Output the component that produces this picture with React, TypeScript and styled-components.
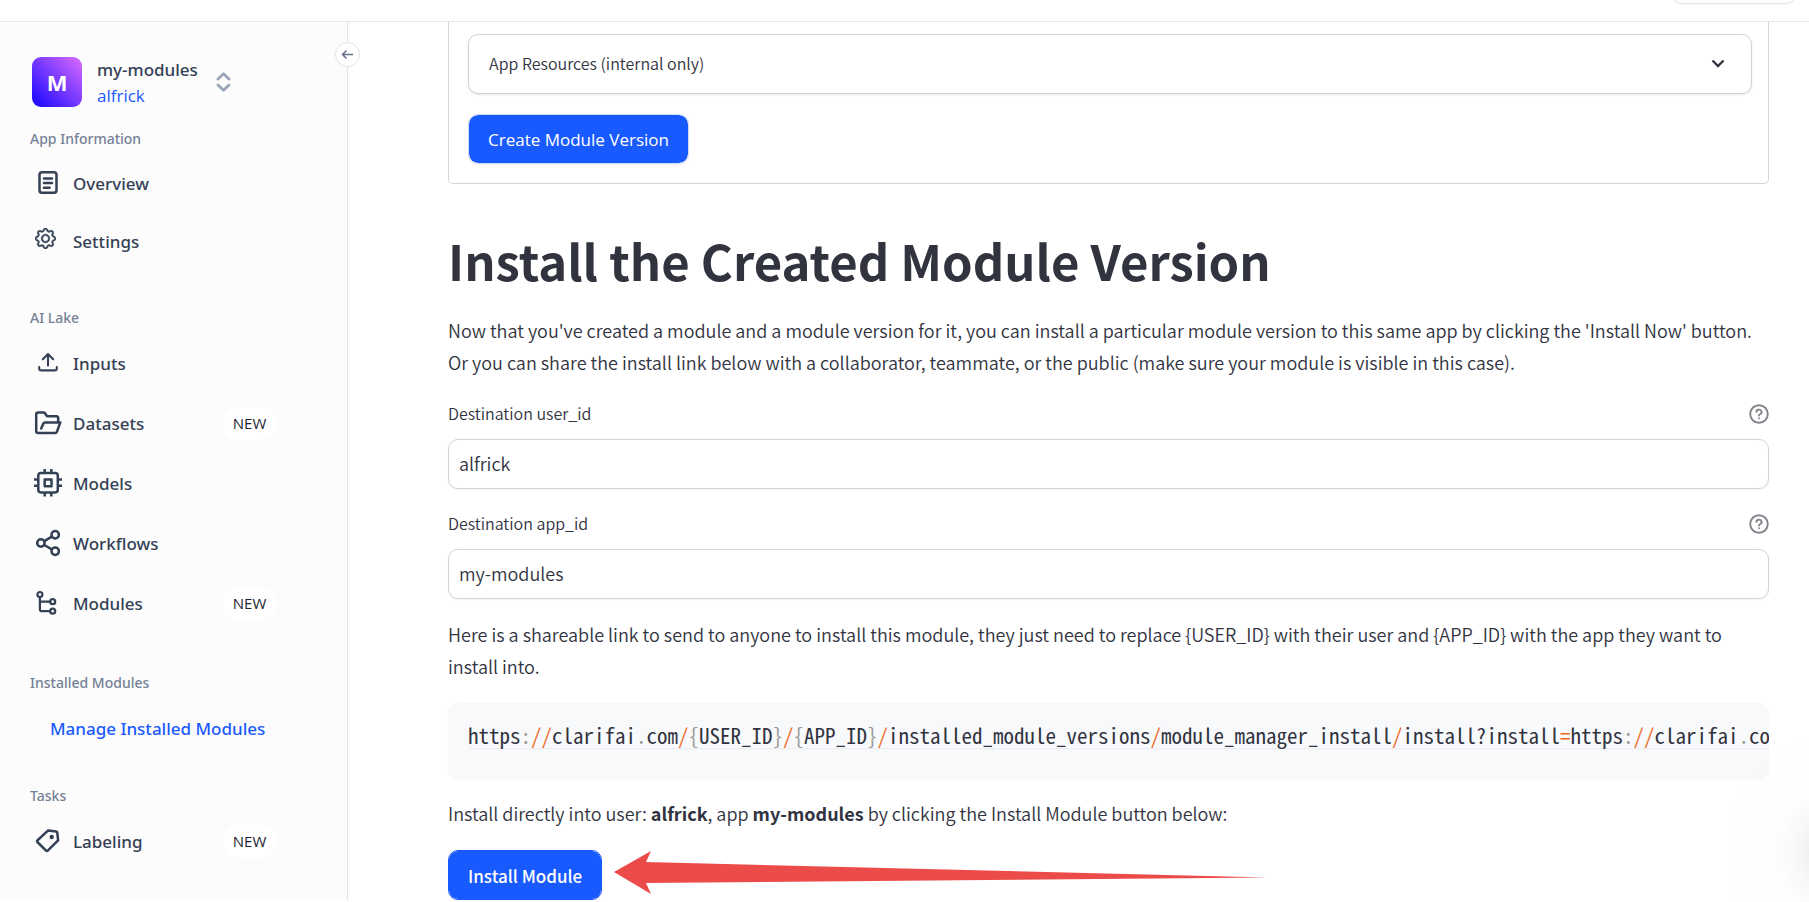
import React from "react";
import styled, { createGlobalStyle } from "styled-components";
import { BsGear } from "react-icons/bs";

const SANS = '"Noto Sans CJK SC", "Noto Sans", sans-serif';
const UI = '"Open Sans", "Noto Sans", sans-serif';
const UI_MEDIUM = '"Noto Sans", "Open Sans", sans-serif';

const GlobalStyle = createGlobalStyle`
  * { box-sizing: border-box; }
  body { margin: 0; background: #fff; color: #31333f; font-family: ${SANS}; font-weight: 350; overflow: hidden; }
  button, input { font: inherit; }
  a { text-decoration: none; color: inherit; }
`;

const Page = styled.div`
  display: flex;
  flex-direction: column;
`;

const TopBar = styled.header`
  display: flex;
  justify-content: flex-end;
  align-items: flex-end;
  height: 22px;
  padding: 0 13px 17px 0;
  border-bottom: 1px solid #e5e7eb;
  overflow: hidden;
`;

const TopButton = styled.button`
  flex: none;
  width: 124px;
  height: 40px;
  border: 1px solid #e2e5ec;
  border-radius: 10px;
  background: #fff;
  box-shadow: 0 1px 2px rgba(0, 0, 0, 0.04);
`;

const Body = styled.div`
  display: flex;
  align-items: stretch;
`;

const Sidebar = styled.aside`
  position: relative;
  flex: none;
  width: 348px;
  padding-top: 35px;
  background: #fcfcfc;
  border-right: 1px solid #e2e3e8;
  font-family: ${UI};
  color: #344054;
`;

const Collapse = styled.button`
  position: absolute;
  top: 20px;
  right: -13px;
  display: flex;
  align-items: center;
  justify-content: center;
  width: 25px;
  height: 25px;
  padding: 0;
  border: 1px solid #e2e3e8;
  border-radius: 50%;
  background: #fff;
`;

const Account = styled.div`
  display: flex;
  align-items: center;
  height: 50px;
  margin-bottom: 22px;
  padding-left: 32px;
`;

const Logo = styled.div`
  display: flex;
  align-items: center;
  justify-content: center;
  width: 50px;
  height: 50px;
  margin-right: 15px;
  border-radius: 9px;
  background: linear-gradient(to top right, #1405ff, #da6cff);
  color: #fff;
  font-size: 22px;
  font-weight: 700;
`;

const AccountText = styled.div`
  display: flex;
  flex-direction: column;
  margin-right: 18px;
  padding-top: 2px;
  font-family: ${UI_MEDIUM};
  font-size: 17px;
  line-height: 26px;
  font-weight: 500;
`;

const UserLink = styled.a`
  color: #195aff;
  font-family: ${UI};
  font-weight: 400;
`;

const Switcher = styled.button`
  display: flex;
  padding: 0;
  border: 0;
  background: none;
`;

const Section = styled.nav<{ $after: number; $row?: number }>`
  --row-height: ${(p) => p.$row ?? 60}px;
  padding-bottom: ${(p) => p.$after}px;
`;

const SectionTitle = styled.h2`
  margin: 0 0 5px;
  padding-left: 30px;
  font-family: ${UI_MEDIUM};
  font-size: 14px;
  line-height: 20px;
  font-weight: 500;
  color: #758195;
`;

const NavItem = styled.a`
  display: flex;
  align-items: center;
  gap: 11px;
  height: var(--row-height);
  padding: 0 71px 0 34px;
  font-family: ${UI_MEDIUM};
  font-size: 17px;
  font-weight: 500;
`;

const ManageLink = styled(NavItem)`
  padding-left: 50px;
  color: #195aff;
`;

const Badge = styled.span`
  margin-left: auto;
  width: 53px;
  border-radius: 17px;
  background: #fff;
  color: #1f1f33;
  font-family: ${UI};
  font-size: 15px;
  line-height: 33px;
  font-weight: 400;
  text-align: center;
`;

const Main = styled.main`
  flex: 1;
  min-width: 0;
  display: flex;
  flex-direction: column;
  align-items: stretch;
  gap: 20px;
  padding: 0 40px 0 100px;
`;

const FormPanel = styled.section`
  display: flex;
  flex-direction: column;
  align-items: flex-start;
  gap: 20px;
  padding: 12px 16px 19px 19px;
  border: 1px solid #d3d5da;
  border-top: 0;
  border-radius: 0 0 5px 5px;
`;

const Expander = styled.button`
  display: flex;
  align-items: center;
  justify-content: space-between;
  width: 100%;
  height: 60px;
  padding: 0 26px 2px 20px;
  border: 1px solid #cdd2dc;
  border-radius: 10px;
  background: #fff;
  box-shadow: 0 1px 2px rgba(16, 24, 40, 0.1);
  color: #31333f;
  font-size: 16px;
`;

const PrimaryButton = styled.button<{ $strong?: boolean }>`
  align-self: flex-start;
  height: 50px;
  padding: 0 19px;
  border: 1px solid ${(p) => (p.$strong ? "#195aff" : "#d3dcf5")};
  border-radius: 10px;
  background: #195aff;
  background-clip: padding-box;
  box-shadow: 0 1px 2px rgba(16, 24, 40, 0.06);
  color: #fff;
  font-family: ${(p) => (p.$strong ? SANS : UI)};
  font-size: 17px;
  font-weight: ${(p) => (p.$strong ? 500 : 400)};
`;

const Title = styled.h1`
  margin: 0;
  padding: 24px 0 4px;
  font-size: 49px;
  line-height: 63px;
  font-weight: 700;
`;

const Text = styled.p`
  margin: -1px 0 1px;
  font-size: 18px;
  line-height: 32px;
`;

const Field = styled.div`
  display: flex;
  flex-direction: column;
  gap: 10px;
`;

const FieldHead = styled.div`
  display: flex;
  align-items: center;
  justify-content: space-between;
  height: 30px;
  font-size: 16px;
`;

const FieldLabel = styled.label`
  padding-bottom: 2px;
`;

const HelpButton = styled.button`
  display: flex;
  padding: 0;
  border: 0;
  background: none;
`;

const TextInput = styled.input`
  width: 100%;
  height: 50px;
  padding: 0 10px 2px;
  border: 1px solid #d0d2de;
  border-radius: 10px;
  background: #fff;
  box-shadow: 0 1px 2px rgba(16, 24, 40, 0.05);
  color: #31333f;
  font-size: 18px;
  outline: none;
`;

const CodeBlock = styled.pre`
  margin: 0;
  height: 75px;
  padding: 20px;
  border-radius: 10px;
  background: #f8f9fb;
  box-shadow: 0 1px 2px rgba(16, 24, 40, 0.04);
  overflow: hidden;
`;

const Code = styled.code`
  display: inline-block;
  border-radius: 5px;
  box-shadow: 0 1px 2px rgba(16, 24, 40, 0.06);
  font-family: "Noto Sans Mono CJK SC", "DejaVu Sans Mono", monospace;
  font-size: 21px;
  line-height: 25px;
`;

const Operator = styled.span`
  color: #ed6a1f;
`;

const Punctuation = styled.span`
  color: #999;
`;

const InstallRow = styled.div`
  display: flex;
  align-items: center;
  gap: 12px;
`;

const Arrow = styled.svg`
  flex: none;
`;

const ChatShadow = styled.div`
  position: fixed;
  right: -60px;
  bottom: 25px;
  width: 50px;
  height: 50px;
  border-radius: 50%;
  box-shadow: 0 0 40px 8px rgba(0, 0, 0, 0.14), 0 0 120px 30px rgba(0, 0, 0, 0.05);
  pointer-events: none;
`;

const iconShapes: Record<string, React.ReactNode> = {
  overview: (
    <>
      <rect x="5.5" y="3.2" width="17" height="20.6" rx="2.6" />
      <path d="M10 9.6h8M10 14h8M10 18.7h5.6" />
    </>
  ),
  inputs: (
    <>
      <path d="M14 16.5V5.5M8.8 10.2 14 5l5.2 5.2" strokeWidth="2.1" />
      <path d="M5.2 18v1.4q0 2 2 2h13.6q2 0 2-2V18" strokeWidth="2.1" />
    </>
  ),
  datasets: (
    <path d="M7.2 19.5 9.4 14.4q.5-1 1.6-1h15.3L23 22.6q-.5 1.4-2 1.4H4.2q-2 0-2-2V5.5q0-2 2-2h5.4q.9 0 1.4.7l1.5 2.3q.5.8 1.4.8h8.3q2 0 2 2v4" />
  ),
  models: (
    <>
      <rect x="4.3" y="3.9" width="19.5" height="19.5" rx="2.6" />
      <rect x="10.7" y="10.4" width="6.8" height="6.8" />
      <path d="M10.7 0v4M17.3 0v4M10.7 23.4v4M17.3 23.4v4M0 10.4h4.3M0 16.8h4.3M23.8 10.4H28M23.8 16.8H28" strokeLinecap="butt" />
    </>
  ),
  workflows: (
    <>
      <circle cx="21.2" cy="5.7" r="3.7" />
      <circle cx="6.9" cy="14" r="3.7" />
      <circle cx="21.2" cy="22.2" r="3.7" />
      <path d="m10.3 12.1 7.5-4.4M10.3 16l7.5 4.3" />
    </>
  ),
  modules: (
    <g strokeWidth="2.2">
      <circle cx="5.9" cy="5.5" r="2.5" />
      <circle cx="18.7" cy="12.7" r="2.5" />
      <circle cx="18.7" cy="22.2" r="2.5" />
      <path d="M5.9 8v12.2q0 2 2 2h8.3M5.9 12.7h10.3" />
    </g>
  ),
  labeling: (
    <>
      <path d="M14.2 3.4 22.2 4.6q1 .2 1.1 1.2l.8 7.6-10.4 10.2q-.8.7-1.6 0L3.3 15q-.7-.8 0-1.5Z" />
      <circle cx="17.7" cy="10" r="2.2" fill="currentColor" stroke="none" />
    </>
  ),
};

function NavIcon({ name }: { name: string }) {
  return (
    <svg width="28" height="28" viewBox="0 0 28 28" fill="none" stroke="#344054" color="#344054" strokeWidth="2.5" strokeLinecap="round" strokeLinejoin="round" aria-hidden="true">
      {name === "settings" ? <BsGear x={1} y={1} size={21} stroke="#344054" strokeWidth={0.5} /> : iconShapes[name]}
    </svg>
  );
}

function NavLink({ icon, label, isNew }: { icon: string; label: string; isNew?: boolean }) {
  return (
    <NavItem href="#">
      <NavIcon name={icon} />
      <span>{label}</span>
      {isNew && <Badge>NEW</Badge>}
    </NavItem>
  );
}

function DestinationField({ id, label, value }: { id: string; label: string; value: string }) {
  return (
    <Field>
      <FieldHead>
        <FieldLabel htmlFor={id}>{label}</FieldLabel>
        <HelpButton type="button" aria-label={`Help: ${label}`}>
          <svg width="20" height="20" viewBox="0 0 20 20" fill="none" stroke="#83858c" strokeWidth="1.9" strokeLinecap="round">
            <circle cx="10" cy="10" r="8.8" />
            <path d="M7.4 7.9a2.6 2.3 0 1 1 3.8 2.1q-1.2.6-1.2 1.5M10 14.2v.1" />
          </svg>
        </HelpButton>
      </FieldHead>
      <TextInput id={id} defaultValue={value} />
    </Field>
  );
}

const INSTALL_LINK =
  "https://clarifai.com/{USER_ID}/{APP_ID}/installed_module_versions/module_manager_install/install?install=https://clarifai.com";

const SHARE_TEXT =
  "Here is a shareable link to send to anyone to install this module, they just need to replace {USER_ID} with their user and {APP_ID} with the app they want to install into.";

function HighlightedLink({ link }: { link: string }) {
  return (
    <>
      {link.split(/([/=:.{}])/).map((part, i) => {
        if (part === "/" || part === "=") return <Operator key={i}>{part}</Operator>;
        if (/^[:.{}]$/.test(part)) return <Punctuation key={i}>{part}</Punctuation>;
        return part;
      })}
    </>
  );
}

export default function App() {
  return (
    <Page>
      <GlobalStyle />
      <TopBar>
        <TopButton type="button" aria-label="Account menu" />
      </TopBar>
      <Body>
        <Sidebar>
          <Collapse type="button" aria-label="Collapse sidebar">
            <svg width="13" height="13" viewBox="0 0 13 13" fill="none" stroke="#64708a" strokeWidth="1.6" strokeLinecap="round" strokeLinejoin="round">
              <path d="M11.5 6.5h-10M5 3 1.5 6.5 5 10" />
            </svg>
          </Collapse>
          <Account>
            <Logo>M</Logo>
            <AccountText>
              <span>my-modules</span>
              <UserLink href="#">alfrick</UserLink>
            </AccountText>
            <Switcher type="button" aria-label="Switch app">
              <svg width="15" height="20" viewBox="0 0 15 20" fill="none" stroke="#9aa5b8" strokeWidth="2.8" strokeLinecap="round" strokeLinejoin="round">
                <path d="m2 7 5.5-5.3L13 7M2 13l5.5 5.3L13 13" />
              </svg>
            </Switcher>
          </Account>
          <Section $after={38} $row={58}>
            <SectionTitle>App Information</SectionTitle>
            <NavLink icon="overview" label="Overview" />
            <NavLink icon="settings" label="Settings" />
          </Section>
          <Section $after={40}>
            <SectionTitle>AI Lake</SectionTitle>
            <NavLink icon="inputs" label="Inputs" />
            <NavLink icon="datasets" label="Datasets" isNew />
            <NavLink icon="models" label="Models" />
            <NavLink icon="workflows" label="Workflows" />
            <NavLink icon="modules" label="Modules" isNew />
          </Section>
          <Section $after={28}>
            <SectionTitle>Installed Modules</SectionTitle>
            <ManageLink href="#">Manage Installed Modules</ManageLink>
          </Section>
          <Section $after={0}>
            <SectionTitle>Tasks</SectionTitle>
            <NavLink icon="labeling" label="Labeling" isNew />
          </Section>
        </Sidebar>
        <Main>
          <FormPanel>
            <Expander type="button" aria-expanded="false">
              <span>App Resources (internal only)</span>
              <svg width="14" height="10" viewBox="0 0 14 10" fill="none" stroke="#31333f" strokeWidth="2.3">
                <path d="m1.5 2.5 5.5 5.5L12.5 2.5" />
              </svg>
            </Expander>
            <PrimaryButton type="button">Create Module Version</PrimaryButton>
          </FormPanel>
          <Title>Install the Created Module Version</Title>
          <Text>
            Now that you've created a module and a module version for it, you can install a particular module version to this same app by clicking the 'Install Now' button. Or you can share the install link below with a collaborator, teammate, or the public (make sure your module is visible in this case).
          </Text>
          <DestinationField id="user-id" label="Destination user_id" value="alfrick" />
          <DestinationField id="app-id" label="Destination app_id" value="my-modules" />
          <Text>{SHARE_TEXT}</Text>
          <CodeBlock>
            <Code>
              <HighlightedLink link={INSTALL_LINK} />
            </Code>
          </CodeBlock>
          <Text>
            Install directly into user: <strong>alfrick</strong>, app <strong>my-modules</strong> by clicking the Install Module button below:
          </Text>
          <InstallRow>
            <PrimaryButton type="button" $strong>
              Install Module
            </PrimaryButton>
            <Arrow width="654" height="50" viewBox="0 0 654 50" aria-hidden="true">
              <path d="M0 22 37 1 32 12 653 27.5 32 33 37 44Z" fill="#ec4c49" />
            </Arrow>
          </InstallRow>
        </Main>
      </Body>
      <ChatShadow />
    </Page>
  );
}
